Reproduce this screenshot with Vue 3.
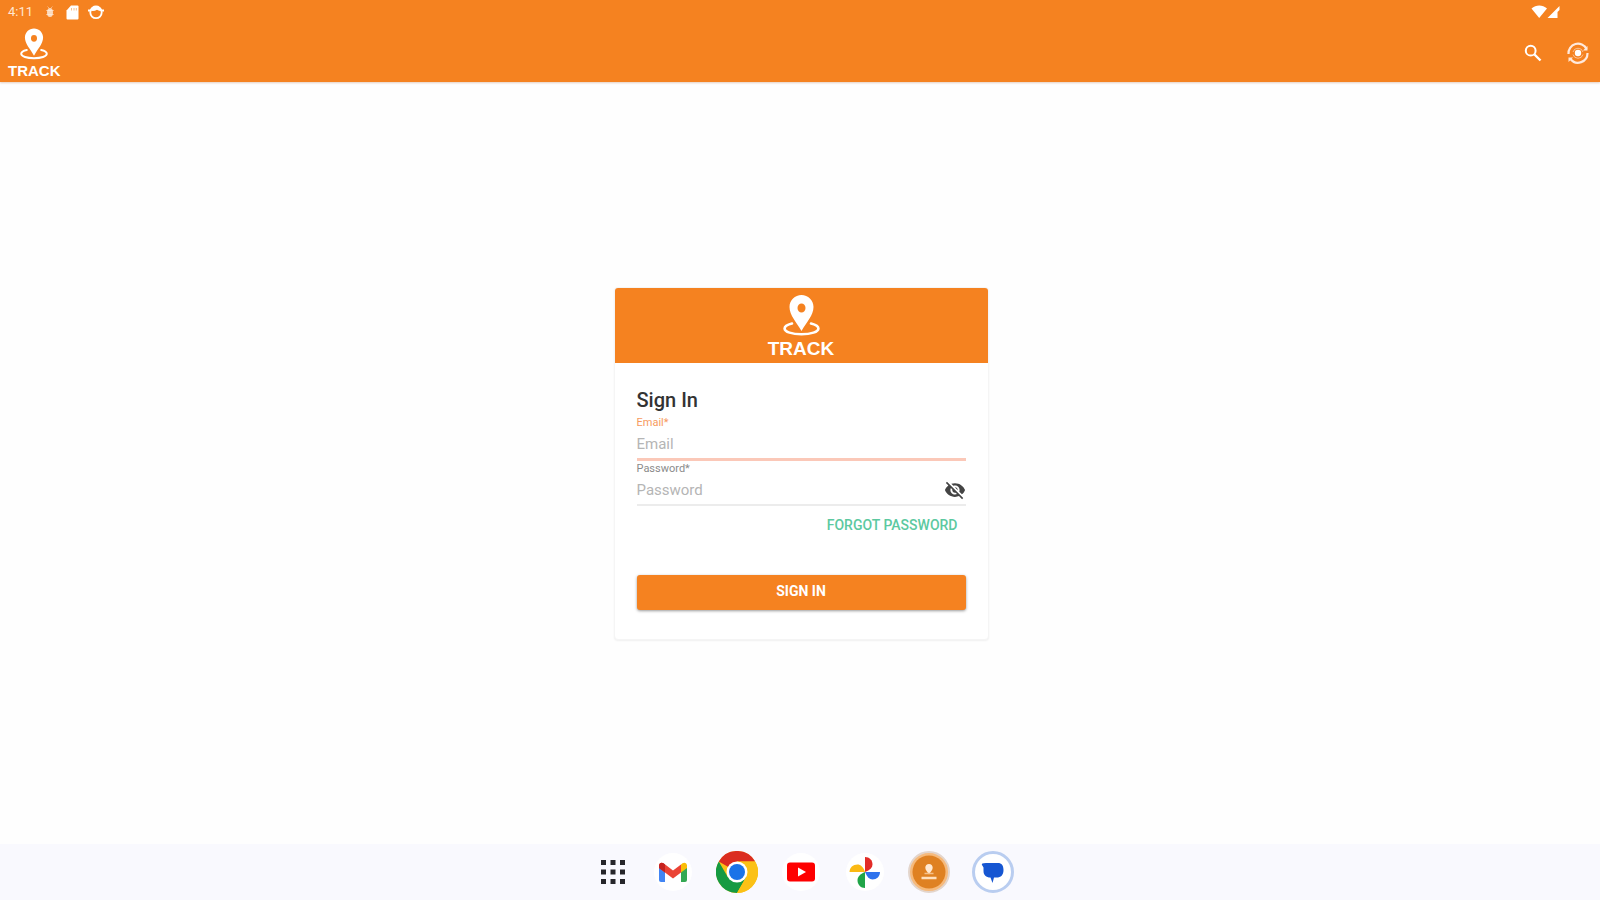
<script setup>
import { ref } from 'vue'

const email = ref('')
const password = ref('')
const visible = ref(false)
</script>

<template>
  <div class="screen">
    <svg class="defs" aria-hidden="true">
      <symbol id="track-pin" viewBox="0 0 37 41">
        <path d="M9 28.500C4.500 29.600 1.600 31.300 1.600 33.400c0 3.500 7.500 5.800 16.900 5.800s16.900-2.300 16.900-5.800c0-2.100-2.900-3.800-7.400-4.900" fill="none" stroke="#fff" stroke-width="2.600" stroke-linecap="round" />
        <path fill-rule="evenodd" d="M18.500 0C12 0 6.500 5 6.500 12 6.500 20.500 13.500 27 18.500 36 23.500 27 30.500 20.500 30.500 12 30.500 5 25 0 18.500 0zm0 8.500a4 4.500 0 1 1 0 9 4 4.500 0 0 1 0-9z" fill="#fff" />
      </symbol>
    </svg>

    <header class="top">
      <div class="status">
        <span class="time">4:11</span>
        <svg class="bug" width="10" height="14" viewBox="0 0 10 14"><path d="M2.500 1.500 4 3M7.500 1.500 6 3M1 5.500h8M1 9.500h8" stroke="#fff" stroke-opacity=".4" /><ellipse cx="5" cy="7.500" rx="3" ry="4.500" fill="#fff" fill-opacity=".7" /></svg>
        <svg class="sd" width="13" height="15" viewBox="0 0 13 15"><path d="M5 .5h6.500A1 1 0 0 1 12.500 1.500v12a1 1 0 0 1-1 1h-10a1 1 0 0 1-1-1V5.500z" fill="#fff" /><path d="M5.500 3v2.500M8 3v2.500M10.300 3v2.500" stroke="#f9c08c" /></svg>
        <svg width="16" height="16" viewBox="0 0 16 16"><circle cx="8" cy="8.500" r="5.700" fill="none" stroke="#fff" stroke-width="1.800" /><path d="M2 6.500C2.500 3.500 5 1.500 8 1.500s5.500 2 6 5c-2 .8-3.500.3-5-.8-2 1.300-4.500 1.700-7 .8z" fill="#fff" /><path d="M0 6.500h2M14 6.500h2" stroke="#fff" stroke-width="2" /></svg>
        <svg class="signal" width="30" height="16" viewBox="0 0 30 16"><path d="M.5 4.500C5 .5 11.500.5 16 4.500L8.200 14z" fill="#fff" /><path d="M28.500 2v4l-2 2v6h-10z" fill="#fff" /></svg>
      </div>
      <div class="bar">
        <div class="brand small">
          <svg class="mark"><use href="#track-pin" /></svg>
          <span>TRACK</span>
        </div>
        <div class="actions">
          <button type="button" aria-label="Search">
            <svg width="18" height="18" viewBox="0 0 18 18" fill="none" stroke="#fff"><circle cx="6.700" cy="6.700" r="4.900" stroke-width="2" /><path d="M10.500 10.500l6 6" stroke-width="2.400" /></svg>
          </button>
          <button type="button" aria-label="Sync location">
            <svg width="24" height="24" viewBox="0 0 24 24"><g fill="none" stroke="#ffe9dc" stroke-width="2.200"><path d="M2.500 13A9.500 9.500 0 0 1 20.500 8" /><path d="M21.500 12A9.500 9.500 0 0 1 4.500 18" /><path d="M2.500 16.500h4.500L2.500 21zM21.500 9.500h-4.500l4.500-4.500z" fill="#ffe9dc" stroke="none" /><path d="M7 11a5.200 5.200 0 0 1 10 0M17 13.500a5.200 5.200 0 0 1-10 0" stroke-width="1" stroke-opacity=".6" /></g><circle cx="12" cy="12" r="3.200" fill="#fff" /></svg>
          </button>
        </div>
      </div>
    </header>

    <main>
      <section class="card">
        <div class="card-head">
          <div class="brand">
            <svg class="mark"><use href="#track-pin" /></svg>
            <span>TRACK</span>
          </div>
        </div>
        <form @submit.prevent>
          <h1>Sign In</h1>
          <div class="field active">
            <label for="email">Email*</label>
            <div class="row"><input id="email" v-model="email" type="email" placeholder="Email" /></div>
          </div>
          <div class="field">
            <label for="password">Password*</label>
            <div class="row">
              <input id="password" v-model="password" :type="visible ? 'text' : 'password'" placeholder="Password" />
              <button class="eye" type="button" aria-label="Toggle password visibility" @click="visible = !visible">
                <svg width="22" height="22" viewBox="0 0 24 24" fill="#444"><path d="M12 7c2.760 0 5 2.240 5 5 0 .65-.13 1.260-.36 1.830l2.920 2.920c1.510-1.260 2.700-2.890 3.430-4.750-1.730-4.390-6-7.500-11-7.500-1.400 0-2.740.25-3.980.7l2.160 2.160C10.740 7.130 11.350 7 12 7zM2 4.270l2.280 2.280.46.46C3.080 8.300 1.780 10.020 1 12c1.730 4.390 6 7.500 11 7.500 1.550 0 3.030-.3 4.380-.84l.42.42L19.730 22 21 20.730 3.270 3 2 4.270zM7.530 9.800l1.550 1.550c-.05.21-.08.43-.08.65 0 1.660 1.340 3 3 3 .22 0 .44-.03.65-.08l1.550 1.550c-.67.33-1.410.53-2.200.53-2.760 0-5-2.240-5-5 0-.79.2-1.530.53-2.200zm4.310-.78l3.150 3.150.02-.16c0-1.660-1.340-3-3-3l-.17.01z" /></svg>
              </button>
            </div>
          </div>
          <a class="forgot" href="#">FORGOT PASSWORD</a>
          <button class="submit" type="submit">SIGN IN</button>
        </form>
      </section>
    </main>

    <nav class="dock" aria-label="Apps">
      <button class="apps" type="button" aria-label="All apps">
        <svg width="26" height="26" viewBox="0 0 26 26" fill="#26262a"><path d="M1 1h5v5H1zM10.500 1h5v5h-5zM20 1h5v5h-5zM1 10.500h5v5H1zM10.500 10.500h5v5h-5zM20 10.500h5v5h-5zM1 20h5v5H1zM10.500 20h5v5h-5zM20 20h5v5h-5z" /></svg>
      </button>
      <button type="button" aria-label="Gmail">
        <svg viewBox="0 0 42 42"><circle cx="21" cy="21" r="19" fill="#fff" /><path d="M7 14l6 4.500V31H9a2 2 0 0 1-2-2z" fill="#4285f4" /><path d="M29 18.500l6-4.500v15a2 2 0 0 1-2 2h-4z" fill="#34a853" /><path d="M29 13.500l1.500-1.200c2-1.500 4.500 0 4.500 2.200V17l-6 4.500z" fill="#fbbc04" /><path d="M7 17v-2.500c0-2.200 2.500-3.700 4.500-2.200l9.500 7.200 8-6v8l-8 6-8-6z" fill="#ea4335" /><path d="M7 17v-2.500c0-2.200 2.500-3.700 4.500-2.200l1.500 1.200v8z" fill="#c5221f" /></svg>
      </button>
      <button type="button" aria-label="Chrome">
        <svg viewBox="0 0 42 42"><circle cx="21" cy="21" r="21" fill="#fbc116" /><path d="M21 21L2.800 10.500A21 21 0 0 1 39.200 10.500H21z" fill="#db2d20" /><path d="M2.800 10.500A21 21 0 0 0 21 42l9.100-15.700L21 21l-9.100 5.300z" fill="#159a42" /><path d="M21 42A21 21 0 0 0 39.200 10.500H21L30.100 26.300z" fill="#fbc116" /><circle cx="21" cy="21" r="10.500" fill="#fff" /><circle cx="21" cy="21" r="8" fill="#1a73e8" /></svg>
      </button>
      <button type="button" aria-label="YouTube">
        <svg viewBox="0 0 42 42"><circle cx="21" cy="21" r="19" fill="#fff" /><rect x="7" y="11.500" width="28" height="19" rx="3" fill="#fe0000" /><path d="M18 16.500l8 4.500-8 4.500z" fill="#fff" /></svg>
      </button>
      <button type="button" aria-label="Photos">
        <svg viewBox="0 0 42 42"><circle cx="21" cy="21" r="19" fill="#fff" /><path d="M21 6c4.500 0 7.500 3.300 7.500 7.500 0 3-2.500 5.500-7.500 7.500z" fill="#e22c27" /><path d="M36 21c0 4.500-3.300 7.500-7.500 7.500-3 0-5.500-2.500-7.500-7.500z" fill="#2d72ed" /><path d="M21 37c-4.500 0-7.500-3.500-7.500-8 0-3 2.500-6 7.500-8z" fill="#20a548" /><path d="M5.500 21c0-4.500 3.500-7.500 8-7.500 3 0 6 2.500 7.500 7.500z" fill="#fbb913" /></svg>
      </button>
      <button type="button" aria-label="Track">
        <svg viewBox="0 0 42 42"><circle cx="21" cy="21" r="20" fill="#f6ba7c" stroke="#e3d5cc" stroke-width="2" /><circle cx="21" cy="21" r="16.500" fill="#df8122" /><path d="M21 13c-2.200 0-3.700 1.600-3.700 3.700 0 2.500 2.300 4 3.700 6.800 1.400-2.800 3.700-4.300 3.700-6.800 0-2.100-1.500-3.700-3.700-3.700z" fill="#ffe9d2" /><path d="M16.500 22.500h9" stroke="#f5c08a" stroke-width="1.500" /><path d="M13.500 27h15" stroke="#ffe0be" stroke-width="2.500" /></svg>
      </button>
      <button type="button" aria-label="Messages">
        <svg viewBox="0 0 42 42"><circle cx="21" cy="21" r="19.500" fill="#fff" stroke="#b9cdf0" stroke-width="3" /><path d="M14 12H26c3.500 0 5.500 2.500 5.500 7 0 5-2.500 7.500-7 7.500H22l-1.500 5.500-2-5.500C14 26.500 11.500 24 11.500 20v-3.500L10 14c-.8-1.300.5-2 4-2z" fill="#1656d2" /></svg>
      </button>
    </nav>
  </div>
</template>

<style>
body { margin: 0; background: #fefefe; }
</style>

<style scoped>
* { box-sizing: border-box; }
.screen {
  min-height: 100vh;
  display: flex;
  flex-direction: column;
  font-family: Roboto, "Liberation Sans", sans-serif;
  background: #fefefe;
}
.defs { display: none; }
button {
  padding: 0;
  border: 0;
  background: none;
  font: inherit;
  cursor: pointer;
}
svg { display: block; }

.top {
  background: #f58220;
  box-shadow: 0 1px 2px rgba(150, 60, 0, .25);
}
.status {
  display: flex;
  align-items: center;
  height: 24px;
  padding: 0 39px 0 8px;
  color: #ffe6d2;
}
.time { font-size: 13px; line-height: 24px; }
.bug { margin-left: 12px; }
.sd { margin: 0 9px 0 11px; }
.signal { margin-left: auto; }
.bar {
  display: flex;
  align-items: center;
  justify-content: space-between;
  height: 58px;
  padding: 0 10px 0 8px;
}
.actions { display: flex; align-items: center; gap: 24px; }

.brand {
  display: flex;
  flex-direction: column;
  align-items: center;
  gap: 3px;
  color: #fff;
  font: bold 19px/20px "Liberation Sans", Arial, sans-serif;
}
.brand .mark { width: 37px; height: 41px; }
.brand.small { font-size: 15px; line-height: 16px; }
.brand.small .mark { width: 28px; height: 32px; }

main {
  flex: 1;
  display: flex;
  align-items: center;
  justify-content: center;
  padding-left: 2px;
}
.card {
  width: 100%;
  max-width: 375px;
  border: 1px solid #f5f5f5;
  border-radius: 4px;
  background: #fff;
  box-shadow: 0 1px 2px rgba(0, 0, 0, .06);
  overflow: hidden;
}
.card-head { padding: 7px 0 4px; background: #f58220; }
form {
  display: flex;
  flex-direction: column;
  padding: 24px 22px 29px;
}
h1 {
  margin: 0 0 2px;
  font-size: 20px;
  line-height: 26px;
  font-weight: 500;
  color: #333;
}
.field { border-bottom: 2px solid #ececec; }
.field label {
  display: block;
  font-size: 11px;
  line-height: 15px;
  color: #8b8b8b;
}
.row { display: flex; align-items: center; height: 28px; }
.field.active { border-bottom: 3px solid #fbc8b8; }
.field.active label { color: #f79a5e; }
input {
  flex: 1;
  min-width: 0;
  padding: 0;
  border: 0;
  outline: 0;
  background: none;
  font: 15px/24px Roboto, "Liberation Sans", sans-serif;
  color: #333;
}
input::placeholder { color: #b5b5b5; opacity: 1; }
.forgot {
  align-self: flex-end;
  margin: 9px 8px 0 0;
  font-size: 14px;
  line-height: 20px;
  font-weight: 500;
  color: #5cc9a0;
  text-decoration: none;
}
.submit {
  height: 35px;
  margin-top: 40px;
  padding-bottom: 2px;
  border-radius: 3px;
  background: #f58220;
  box-shadow: 0 1px 3px rgba(0, 0, 0, .4);
  color: #fff;
  font-size: 14px;
  font-weight: 700;
}

.dock {
  display: flex;
  align-items: center;
  justify-content: center;
  gap: 22px;
  height: 56px;
  padding-left: 14px;
  background: #f9f9fe;
}
.apps { margin-right: 4px; }
.dock button:not(.apps) svg { width: 42px; height: 42px; }
</style>
